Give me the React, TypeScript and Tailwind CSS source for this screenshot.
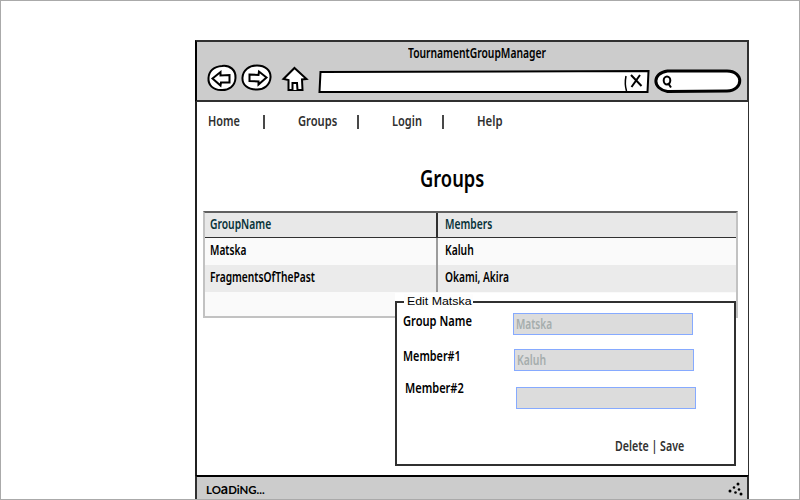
import { useLayoutEffect, useRef, useState, type ReactNode } from "react";

type LabelProps = { text: ReactNode; width: number; className?: string };

/* Condensed lettering: the text is squeezed horizontally to its label width. */
function Label({ text, width, className = "" }: LabelProps) {
  const ref = useRef<HTMLSpanElement>(null);
  const [scale, setScale] = useState(1);
  useLayoutEffect(() => {
    if (ref.current) setScale(width / ref.current.offsetWidth);
  }, [width]);
  return (
    <span className={`block shrink-0 whitespace-nowrap ${className}`} style={{ width }}>
      <span ref={ref} className="inline-block origin-left" style={{ transform: `scaleX(${scale})` }}>
        {text}
      </span>
    </span>
  );
}

/* Vertical stroke between navigation entries. */
function Bar({ className }: { className: string }) {
  return <span className={`mt-[13px] h-[14px] shrink-0 border-l-2 border-[#484848] ${className}`} />;
}

function Toolbar() {
  return (
    <div className="flex h-[36px] items-start pl-[9px] pt-px">
      <svg width="32" height="30" viewBox="0 0 32 30" fill="#fff" stroke="#000" strokeWidth="2">
        <path d="M16 3C24 2 30 7 29.500 15C29 23 23 27.500 15 27C7 27 2 22 2.500 15C3 8 8 3.500 16 3Z" />
        <path d="M6.500 15.500L14.500 9V12.500L23.500 12V19.500H15L14.500 22.500Z" />
      </svg>
      <svg className="ml-[2px]" width="32" height="30" viewBox="0 0 32 30" fill="#fff" stroke="#000" strokeWidth="2">
        <path d="M17 2.500C25 2.500 31 7 30.500 14.500C30 22 24 27 16 26.500C8 26.500 2 22 2.500 14.500C3 7 9 2.500 17 2.500Z" />
        <path d="M9.500 11.500L18.500 12L19 8.500L26.500 14.500L18.500 21.500V18.500L9.500 18Z" />
      </svg>
      <svg className="ml-[7px]" width="30" height="30" viewBox="0 0 30 30" fill="#fff" stroke="#000" strokeWidth="2">
        <path d="M15.500 5L27.500 16L23 16.500L23.500 27H9.500L9.500 17L4.500 16Z" />
        <path d="M13.500 27V20H18L18.500 27" />
      </svg>
      <svg className="ml-[8px]" width="334" height="30" viewBox="0 0 334 30" fill="none" stroke="#000" strokeWidth="2">
        <path d="M3.500 9L331.500 8L330.500 29L2.500 29Z" fill="#fff" />
        <path d="M309 13C308 18 308 23 309.500 28" strokeWidth="1.500" />
        <path d="M314 12L324.500 23M323 12L314.500 24" />
      </svg>
      <svg className="ml-[2px]" width="90" height="30" viewBox="0 0 90 30" fill="none" stroke="#000" strokeWidth="3">
        <path d="M14.500 8H74C91 8 91 27.500 74 28L14.500 28.500C-1 26 -1 10 14.500 8Z" fill="#fff" />
        <ellipse cx="14" cy="17.500" rx="3.300" ry="4" strokeWidth="2" />
        <path d="M15 20L18 24.500" strokeWidth="2" />
      </svg>
    </div>
  );
}

function Field({ value, width = 0 }: { value?: string; width?: number }) {
  return (
    <div className="h-[22px] w-[180px] border border-[#86aaff] bg-[#dcdcdc] pl-[2px] leading-[20px] text-[#a5adad]">
      {value && <Label text={value} width={width} />}
    </div>
  );
}

function EditGroup() {
  return (
    <section className="absolute left-[200px] top-[253px] h-[173px] w-[341px] bg-white pt-[8px] text-[14px] font-semibold text-black">
      <div className="h-[165px] border-2 border-[#303030]">
        <div className="-mt-[9px] ml-[7px] flex h-[14px] w-[69px] justify-center bg-[#fdfdfd] font-['Liberation_Sans',sans-serif] text-[11px] font-normal leading-[14px]">
          <Label text="Edit Matska" width={64} />
        </div>
        <div className="mt-[5px] flex pl-[6px]">
          <Label text="Group Name" width={69} className="mt-[-2px] leading-[20px]" />
          <div className="ml-[41px]"><Field value="Matska" width={36} /></div>
        </div>
        <div className="mt-[14px] flex pl-[6px]">
          <Label text="Member#1" width={58} className="mt-[-3px] leading-[20px]" />
          <div className="ml-[53px]"><Field value="Kaluh" width={29} /></div>
        </div>
        <div className="mt-[16px] flex pl-[8px]">
          <Label text="Member#2" width={59} className="mt-[-9px] leading-[20px]" />
          <div className="ml-[52px]"><Field /></div>
        </div>
        <div className="mt-[27px] flex pl-[218px] leading-[20px] text-[#303030]">
          <Label text="Delete | Save" width={69} />
        </div>
      </div>
    </section>
  );
}

function GroupTable() {
  return (
    <div className="ml-[6px] h-[107px] w-[535px] border-2 border-[#c2c2c2] border-t-[#606060] bg-[#fafafa] text-[13.5px] font-semibold text-black">
      <div className="flex h-[25px] border-b border-[#303030] bg-[#e8e8e8] text-[#073339]">
        <div className="w-[233px] border-r-2 border-[#303030] pl-[5px] leading-[22px]"><Label text="GroupName" width={61} /></div>
        <div className="pl-[7px] leading-[22px]"><Label text="Members" width={47} /></div>
      </div>
      <div className="flex h-[27px]">
        <div className="w-[233px] border-r-2 border-[#9c9c9c] pl-[5px] leading-[25px]"><Label text="Matska" width={36} /></div>
        <div className="pl-[7px] leading-[25px]"><Label text="Kaluh" width={29} /></div>
      </div>
      <div className="flex h-[27px] bg-[#ebebeb]">
        <div className="w-[233px] border-r-2 border-[#9c9c9c] pl-[5px] leading-[25px]"><Label text="FragmentsOfThePast" width={105} /></div>
        <div className="pl-[7px] leading-[25px]"><Label text="Okami, Akira" width={64} /></div>
      </div>
    </div>
  );
}

export default function App() {
  return (
    <div className="h-[500px] w-[800px] overflow-hidden border border-[#aaa] bg-white pl-[194px] pt-[39px] font-['Noto_Sans','Open_Sans',sans-serif]">
      <main className="relative flex h-[459px] w-[554px] flex-col">
        <header className="h-[62px] border-2 border-[#303030] border-l-black bg-[#ccc]">
          <div className="flex h-[20px] pl-[211px] text-[13.5px] font-semibold leading-[22px] text-black">
            <Label text="TournamentGroupManager" width={138} />
          </div>
          <Toolbar />
        </header>
        <div className="h-[373px] border-l-2 border-r border-l-[#202020] border-r-[#303030]">
          <nav className="flex h-[38px] pl-[11px] text-[14px] font-semibold leading-[38px] text-[#303030]">
            <Label text="Home" width={32} />
            <Bar className="ml-[23px] w-[4px]" />
            <Label text="Groups" width={39} className="ml-[31px]" />
            <Bar className="ml-[20px] w-[4px]" />
            <Label text="Login" width={30} className="ml-[31px]" />
            <Bar className="ml-[20px] w-[4px]" />
            <Label text="Help" width={26} className="ml-[31px]" />
          </nav>
          <h1 className="flex h-[71px] pl-[223px] pt-[22px] text-[24px] font-semibold leading-[32px] text-black">
            <Label text="Groups" width={64} />
          </h1>
          <GroupTable />
        </div>
        <footer className="flex h-[24px] justify-between border-x-2 border-t-2 border-x-[#303030] border-t-black bg-[#ccc] pl-[9px] text-black">
          <Label
            text={<>LO<span className="text-[15px] leading-none">a</span>DiNG...</>}
            width={59}
            className="font-['Lato',sans-serif] text-[12px] font-bold leading-[25px]"
          />
          <svg className="mt-[4px]" width="20" height="16" viewBox="0 0 20 16">
            <circle cx="11" cy="3" r="1.500" /><circle cx="7" cy="6.500" r="1.300" /><circle cx="12" cy="8.500" r="1.300" />
            <circle cx="3" cy="10" r="1.500" /><circle cx="8.500" cy="11.500" r="1.300" /><circle cx="14" cy="13" r="1.500" />
          </svg>
        </footer>
        <EditGroup />
      </main>
    </div>
  );
}
